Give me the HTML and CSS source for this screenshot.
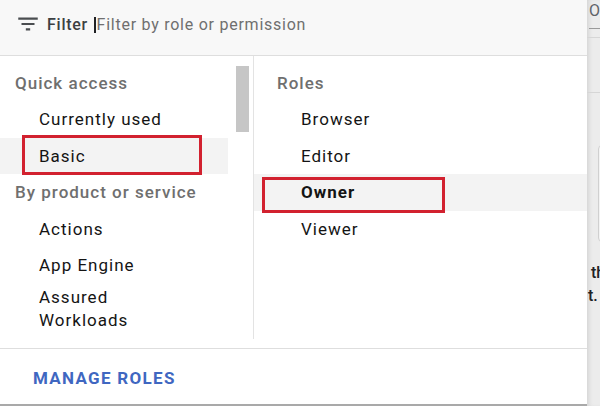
FILE: index.html
```html
<!DOCTYPE html>
<html>
<head>
<meta charset="utf-8">
<link rel="stylesheet" href="styles.css">
</head>
<body>
<div class="page">
  <div class="dialog">
    <div class="header">
      <svg class="filter-icon" viewBox="0 0 24 24" width="26" height="26"><path d="M10 18h4v-2h-4v2zM3 6v2h18V6H3zm3 7h12v-2H6v2z" fill="#4a4d50"/></svg>
      <span class="filter-label">Filter</span>
      <span class="cursor"></span>
      <span class="placeholder">Filter by role or permission</span>
    </div>
    <div class="body">
      <div class="left">
        <div class="list">
          <div class="row head">Quick access</div>
          <div class="row item">Currently used</div>
          <div class="row item selected">Basic<span class="mark mark-left"></span></div>
          <div class="row head">By product or service</div>
          <div class="row item">Actions</div>
          <div class="row item">App Engine</div>
          <div class="row item multi">Assured<br>Workloads</div>
        </div>
        <div class="scroll"><div class="thumb"></div></div>
      </div>
      <div class="right">
        <div class="row head">Roles</div>
        <div class="row item">Browser</div>
        <div class="row item">Editor</div>
        <div class="row item selected strong">Owner<span class="mark mark-right"></span></div>
        <div class="row item">Viewer</div>
      </div>
    </div>
    <div class="footer">
      <span class="manage">MANAGE ROLES</span>
    </div>
  </div>
  <div class="side">
    <div class="tab">O</div>
    <div class="side-line l1"></div>
    <div class="side-line l2"></div>
    <div class="side-card"></div>
    <div class="side-text t1">th</div>
    <div class="side-text t2">t.</div>
  </div>
</div>
</body>
</html>
```
FILE: styles.css
```css
html, body {
  margin: 0;
  padding: 0;
}
body {
  width: 600px;
  height: 406px;
  overflow: hidden;
  background: #e8e8e8;
  font-family: Roboto, "Liberation Sans", sans-serif;
  color: #202124;
}
.page {
  display: flex;
  height: 406px;
}
.dialog {
  width: 587px;
  flex: none;
  height: 404px;
  background: #fff;
  border-bottom: 2px solid #a9a9a9;
  display: flex;
  flex-direction: column;
}
.header {
  height: 56px;
  box-sizing: border-box;
  padding-bottom: 6px;
  background: #f8f8f8;
  border-bottom: 1px solid #dedede;
  display: flex;
  align-items: center;
  font-size: 16px;
  letter-spacing: 0.75px;
}
.filter-icon {
  margin-left: 15px;
  margin-top: -2px;
}
.filter-label {
  margin-left: 6px;
  font-weight: 500;
  color: #3c4043;
}
.cursor {
  width: 1.5px;
  height: 16px;
  background: #202124;
  margin-left: 6px;
}
.placeholder {
  margin-left: 1px;
  color: #6f6f6f;
}
.body {
  height: 283px;
  padding-bottom: 9px;
  border-bottom: 1px solid #dedede;
  display: flex;
}
.left {
  width: 253px;
  flex: none;
  display: flex;
  border-right: 1px solid #e3e3e3;
  overflow: hidden;
}
.list {
  width: 228px;
  flex: none;
  padding-top: 8.5px;
}
.scroll {
  width: 25px;
  flex: none;
  padding-top: 10px;
}
.thumb {
  margin-left: 8px;
  width: 13px;
  height: 66px;
  background: #c6c6c6;
}
.right {
  flex: 1;
  padding-top: 8.5px;
}
.row {
  height: 36.5px;
  display: flex;
  align-items: center;
  font-size: 17px;
  letter-spacing: 1px;
  position: relative;
}
.row.head {
  padding-left: 15px;
  color: #6f6f6f;
  font-weight: 500;
}
.row.item {
  padding-left: 39px;
  color: #141414;
}
.right .row.head {
  padding-left: 23px;
}
.right .row.item {
  padding-left: 47px;
}
.row.selected {
  background: #f3f3f3;
}
.row.strong {
  font-weight: 700;
}
.row.multi {
  height: auto;
  display: block;
  line-height: 23px;
  padding-top: 2px;
}
.mark {
  position: absolute;
  border: 3px solid #d2212f;
  box-sizing: border-box;
}
.mark-left {
  left: 22px;
  top: -3px;
  width: 180px;
  height: 40px;
}
.mark-right {
  left: 8px;
  top: 3px;
  width: 183px;
  height: 36px;
}
.footer {
  flex: 1;
  display: flex;
  align-items: center;
  padding-left: 33px;
}
.manage {
  font-size: 17px;
  font-weight: 700;
  letter-spacing: 1.3px;
  color: #3f67c1;
  margin-top: 2px;
}
.side {
  flex: 1;
  position: relative;
  background: #ececec;
  box-shadow: inset 4px 0 4px -2px #d4d4d4;
  overflow: hidden;
}
.tab {
  position: absolute;
  left: 2px;
  top: 1px;
  font-size: 16px;
  color: #5f6368;
  border-bottom: 1px solid #9a9a9a;
  width: 20px;
  height: 27px;
}
.side-line {
  position: absolute;
  left: 0;
  width: 20px;
  height: 1px;
  background: #d6d6d6;
}
.l1 { top: 37px; }
.l2 { top: 92px; }
.side-card {
  position: absolute;
  left: 11px;
  top: 145px;
  width: 30px;
  height: 95px;
  border: 1px solid #d0d0d0;
  border-radius: 4px;
  background: #f3f3f3;
}
.side-text {
  position: absolute;
  font-size: 16px;
  color: #202124;
  font-weight: 500;
}
.t1 { left: 4px; top: 263px; }
.t2 { left: 1px; top: 286px; }
```
